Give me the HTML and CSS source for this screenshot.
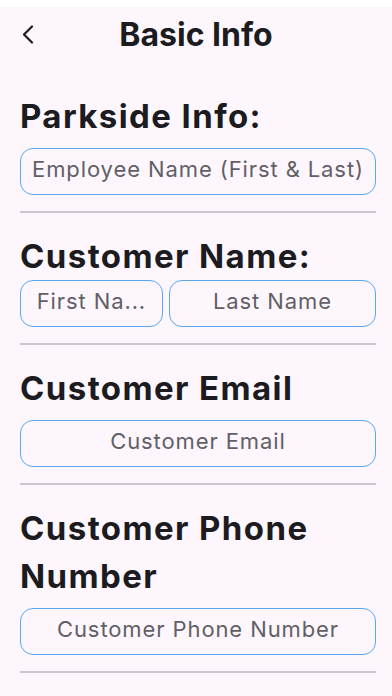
FILE: index.html
```html
<!DOCTYPE html>
<html lang="en">
<head>
<meta charset="utf-8">
<meta name="viewport" content="width=device-width, initial-scale=1">
<title>Basic Info</title>
<link rel="stylesheet" href="styles.css">
</head>
<body>
<div class="statusbar"></div>
<header class="navbar">
  <button class="back" aria-label="Back">
    <svg width="12" height="20" viewBox="0 0 12 20" fill="none" stroke="#1c1b1f" stroke-width="2.2" stroke-linecap="round" stroke-linejoin="round"><path d="M10 1.5 L2 9.5 L10 17.5"/></svg>
  </button>
  <h1 class="title">Basic Info</h1>
</header>
<main class="content">
  <section class="section">
    <h2 class="heading">Parkside Info:</h2>
    <div class="field"><span class="placeholder">Employee Name (First &amp; Last)</span></div>
    <hr class="divider">
  </section>
  <section class="section">
    <h2 class="heading tight">Customer Name:</h2>
    <div class="row">
      <div class="field first"><span class="placeholder">First Na...</span></div>
      <div class="field last"><span class="placeholder">Last Name</span></div>
    </div>
    <hr class="divider">
  </section>
  <section class="section">
    <h2 class="heading">Customer Email</h2>
    <div class="field"><span class="placeholder">Customer Email</span></div>
    <hr class="divider">
  </section>
  <section class="section">
    <h2 class="heading">Customer Phone Number</h2>
    <div class="field"><span class="placeholder">Customer Phone Number</span></div>
    <hr class="divider">
  </section>
</main>
</body>
</html>
```
FILE: styles.css
```css
* { box-sizing: border-box; }
html, body {
  margin: 0;
  padding: 0;
}
body {
  background: #fdf7fd;
  font-family: Inter, "Noto Sans", "Liberation Sans", sans-serif;
  color: #1c1b1f;
  width: 392px;
  height: 696px;
  overflow: hidden;
}
.statusbar {
  height: 7px;
  background: #ffffff;
}
.navbar {
  position: relative;
  height: 57px;
  display: flex;
  align-items: center;
  justify-content: center;
}
.back {
  position: absolute;
  left: 21px;
  top: 17px;
  width: 14px;
  height: 22px;
  padding: 0;
  border: 0;
  background: none;
  display: flex;
  align-items: center;
  justify-content: center;
}
.title {
  margin: 0 0 2px 0;
  font-size: 32px;
  font-weight: 700;
  letter-spacing: 0;
  line-height: 40px;
}
.content {
  padding: 28px 16px 0 20px;
}
.section {
  display: flex;
  flex-direction: column;
}
.heading {
  margin: 0 0 8px 0;
  font-size: 33px;
  font-weight: 700;
  line-height: 48px;
  letter-spacing: 1.4px;
}
.heading.tight {
  margin-bottom: 0;
}
.field {
  height: 47px;
  border: 1.5px solid #5aa8f2;
  border-radius: 13px;
  display: flex;
  align-items: center;
  justify-content: center;
  overflow: hidden;
  padding: 0 6px 5px 6px;
}
.placeholder {
  font-size: 22px;
  color: #625f66;
  white-space: nowrap;
  letter-spacing: 0.9px;
}
.row {
  display: flex;
  gap: 6px;
}
.field.first { flex: 2; }
.field.last { flex: 3; }
.divider {
  margin: 16px 0 19px 0;
  border: 0;
  height: 2px;
  background: #cbc6ce;
}
```
